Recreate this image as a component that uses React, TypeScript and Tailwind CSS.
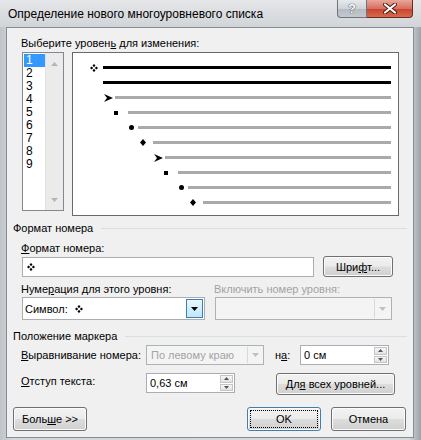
import React from "react";

const rows = [
  { lead: "w-[30px]", pr: "pr-[5px]", sym: "quad", line: "bg-black" },
  { lead: "w-[30px]", pr: "pr-[5px]", sym: "", line: "bg-black" },
  { lead: "w-[42px]", pr: "pr-[2px]", sym: "arrow", line: "bg-[#aaaaaa]" },
  { lead: "w-[55px]", pr: "pr-[10px]", sym: "square", line: "bg-[#aaaaaa]" },
  { lead: "w-[65px]", pr: "pr-[4px]", sym: "circle", line: "bg-[#aaaaaa]" },
  { lead: "w-[80px]", pr: "pr-[7px]", sym: "diamond", line: "bg-[#aaaaaa]" },
  { lead: "w-[92px]", pr: "pr-[2px]", sym: "arrow", line: "bg-[#aaaaaa]" },
  { lead: "w-[105px]", pr: "pr-[10px]", sym: "square", line: "bg-[#aaaaaa]" },
  { lead: "w-[115px]", pr: "pr-[4px]", sym: "circle", line: "bg-[#aaaaaa]" },
  { lead: "w-[130px]", pr: "pr-[7px]", sym: "diamond", line: "bg-[#aaaaaa]" },
];

function Quad() {
  return (
    <svg width="8" height="8" viewBox="0 0 8 8">
      <path d="M4 0 L5.5 1.6 L4 3.2 L2.5 1.6 Z M4 4.8 L5.5 6.4 L4 8 L2.5 6.4 Z M0 4 L1.6 2.5 L3.2 4 L1.6 5.5 Z M4.8 4 L6.4 2.5 L8 4 L6.4 5.5 Z" fill="#000" />
    </svg>
  );
}

function Symbol({ kind }: { kind: string }) {
  if (kind === "quad") return <Quad />;
  if (kind === "arrow")
    return (
      <svg width="9" height="8" viewBox="0 0 9 8">
        <path d="M0 0 L9 4 L0 8 L3 4 Z" fill="#000" />
      </svg>
    );
  if (kind === "square") return <div className="w-[4px] h-[4px] bg-black" />;
  if (kind === "circle") return <div className="w-[5px] h-[5px] rounded-full bg-black" />;
  if (kind === "diamond")
    return (
      <svg width="6" height="7" viewBox="0 0 6 7">
        <path d="M3 0 L6 3.5 L3 7 L0 3.5 Z" fill="#000" />
      </svg>
    );
  return null;
}

function Btn({
  children,
  className = "",
  focused = false,
}: {
  children: React.ReactNode;
  className?: string;
  focused?: boolean;
}) {
  return (
    <div
      className={`flex items-stretch rounded-[3px] border ${
        focused ? "border-[#3c7fb1]" : "border-[#707070]"
      } bg-[linear-gradient(#f2f2f2_0%,#ebebeb_48%,#dddddd_52%,#cfcfcf_100%)] shadow-[inset_0_0_0_1px_#fbfbfb] ${className}`}
    >
      <div
        className={`flex-1 flex items-center justify-center m-[2px] border ${
          focused ? "border-dotted border-black" : "border-transparent"
        }`}
      >
        <span className="whitespace-nowrap">{children}</span>
      </div>
    </div>
  );
}

function Spinner({ value, className = "" }: { value: string; className?: string }) {
  return (
    <div className={`flex items-stretch border border-[#abadb3] bg-white ${className}`}>
      <div className="flex-1 flex items-center pl-[3px]">{value}</div>
      <div className="w-[13px] flex flex-col my-[1px] mr-[1px] gap-[1px]">
        <div className="flex-1 flex items-center justify-center border border-[#c5c5c5] bg-[linear-gradient(#f6f6f6,#e2e2e2)]">
          <svg width="5" height="3" viewBox="0 0 5 3"><path d="M0 3 L2.5 0 L5 3 Z" fill="#555" /></svg>
        </div>
        <div className="flex-1 flex items-center justify-center border border-[#c5c5c5] bg-[linear-gradient(#f6f6f6,#e2e2e2)]">
          <svg width="5" height="3" viewBox="0 0 5 3"><path d="M0 0 L2.5 3 L5 0 Z" fill="#555" /></svg>
        </div>
      </div>
    </div>
  );
}

function DownArrow({ color }: { color: string }) {
  return (
    <svg width="7" height="4" viewBox="0 0 7 4">
      <path d="M0 0 L7 0 L3.5 4 Z" fill={color} />
    </svg>
  );
}

function SectionHead({ title }: { title: string }) {
  return (
    <div className="flex items-center h-[16px] -ml-[9px] mr-[6px]">
      <span className="whitespace-nowrap">{title}</span>
      <div className="flex-1 h-px bg-[#d5dfe5] ml-[8px]" />
    </div>
  );
}

export default function App() {
  return (
    <div className="w-[421px] h-[440px] flex flex-col bg-[linear-gradient(90deg,#bfc4c9_0%,#d3d7db_3%,#d6d9dc_97%,#9da3a9_100%)] font-['Liberation_Sans',Arial,sans-serif] text-[11px] leading-[16px] text-black overflow-hidden">
      {/* Title bar */}
      <div className="h-[27px] flex items-start bg-[linear-gradient(#e4e6e8,#d2d5d8)]">
        <span className="pl-[8px] pt-[6px] text-[12px] leading-[16px] whitespace-nowrap">Определение нового многоуровневого списка</span>
        <div className="ml-auto mr-[8px] flex">
          <div className="w-[30px] h-[18px] flex items-center justify-center border border-[#6d7680] border-t-0 rounded-bl-[4px] bg-[linear-gradient(#e6e9ec_0%,#cfd4d9_50%,#b4bac1_51%,#c4c9ce_100%)]">
            <span className="font-bold text-[13px] leading-[13px] text-white [text-shadow:0_0_1px_#2d3540,0_0_1px_#2d3540]">?</span>
          </div>
          <div className="w-[46px] h-[18px] flex items-center justify-center border border-[#6e2a22] border-t-0 border-l-0 rounded-br-[4px] bg-[linear-gradient(#e8a79b_0%,#d7705f_50%,#c7432c_51%,#d66a4c_100%)]">
            <svg width="14" height="11" viewBox="0 0 14 11">
              <path d="M2 1.5 L12 9.5 M12 1.5 L2 9.5" stroke="#4a1a14" strokeWidth="4" strokeLinecap="round" />
              <path d="M2 1.5 L12 9.5 M12 1.5 L2 9.5" stroke="#ffffff" strokeWidth="2.2" strokeLinecap="round" />
            </svg>
          </div>
        </div>
      </div>

      {/* Dialog body */}
      <div className="ml-[6px] w-[408px] h-[411px] border border-[#858c94] bg-[#f0f0f0] pl-[15px] flex flex-col">
        <div className="mt-[7px] -ml-[1px] h-[16px] whitespace-nowrap">
          Выберите уровен<span className="underline">ь</span> для изменения:
        </div>

        <div className="mt-[1px] flex items-start h-[164px]">
          {/* level list */}
          <div className="w-[42px] h-[159px] border border-[#828790] bg-white flex text-[12px]">
            <div className="w-[22px] pt-px pl-px flex flex-col">
              {["1", "2", "3", "4", "5", "6", "7", "8", "9"].map((n) => (
                <div
                  key={n}
                  className={`h-[13px] leading-[13px] pl-[2px] ${n === "1" ? "bg-[#3399ff] text-white" : ""}`}
                >
                  {n}
                </div>
              ))}
            </div>
            <div className="flex-1 bg-[#ebebeb] border-l border-[#e3e3e3] flex flex-col items-center justify-between pt-[9px] pb-[8px]">
              <svg width="7" height="4" viewBox="0 0 7 4"><path d="M0 4 L3.5 0 L7 4 Z" fill="#b5b5b5" /></svg>
              <DownArrow color="#b5b5b5" />
            </div>
          </div>

          {/* preview */}
          <div className="ml-[8px] w-[327px] h-[164px] border border-[#696969] bg-white pt-[7px] pr-[7px] flex flex-col">
            {rows.map((r, i) => (
              <div key={i} className="flex items-center h-[15px]">
                <div className={`${r.lead} ${r.pr} flex items-center justify-end shrink-0`}>
                  <Symbol kind={r.sym} />
                </div>
                <div className={`flex-1 h-[3px] ${r.line}`} />
              </div>
            ))}
          </div>
        </div>

        {/* Формат номера */}
        <div className="mt-[4px]">
          <SectionHead title="Формат номера" />
        </div>
        <div className="mt-[4px] -ml-[1px] h-[16px] whitespace-nowrap">
          <span className="underline">Ф</span>ормат номера:
        </div>
        <div className="flex items-center h-[21px]">
          <div className="w-[292px] h-[20px] border border-[#abadb3] bg-white flex items-center pl-[4px]">
            <Quad />
          </div>
          <Btn className="ml-[9px] w-[70px] h-[21px]">
            Шри<span className="underline">ф</span>т...
          </Btn>
        </div>

        <div className="mt-[4px] flex h-[16px] whitespace-nowrap">
          <div className="w-[193px] -ml-[1px]">
            Нуме<span className="underline">р</span>ация для этого уровня:
          </div>
          <div className="text-[#a3a3a3]">Включить номер уровня:</div>
        </div>
        <div className="flex h-[23px]">
          <div className="w-[183px] border border-[#abadb3] bg-white flex items-stretch">
            <div className="flex-1 flex items-center pl-[2px]">
              <span className="mr-[7px]">Символ:</span>
              <Quad />
            </div>
            <div className="w-[17px] m-px border border-[#3c7fb1] bg-[linear-gradient(#eaf6fd,#bee6fd)] flex items-center justify-center">
              <DownArrow color="#000" />
            </div>
          </div>
          <div className="ml-[10px] w-[177px] border border-[#adb2b5] bg-[#f4f4f4] flex items-stretch justify-end">
            <div className="w-[16px] my-px mr-px border-l border-[#d9d9d9] flex items-center justify-center">
              <DownArrow color="#c0c0c0" />
            </div>
          </div>
        </div>

        {/* Положение маркера */}
        <div className="mt-[8px]">
          <SectionHead title="Положение маркера" />
        </div>
        <div className="flex items-center h-[22px] whitespace-nowrap">
          <div className="w-[125px] -ml-[1px]">
            <span className="underline">В</span>ыравнивание номера:
          </div>
          <div className="w-[118px] h-[20px] border border-[#adb2b5] bg-[#f4f4f4] flex items-stretch">
            <div className="flex-1 flex items-center pl-[4px] text-[#a3a3a3]">По левому краю</div>
            <div className="w-[15px] my-px mr-px border-l border-[#d9d9d9] flex items-center justify-center">
              <DownArrow color="#c0c0c0" />
            </div>
          </div>
          <div className="ml-[11px] w-[25px]">
            н<span className="underline">а</span>:
          </div>
          <Spinner value="0 см" className="w-[89px] h-[20px]" />
        </div>

        <div className="mt-[6px] flex items-start h-[24px] whitespace-nowrap">
          <div className="w-[125px] -ml-[1px] mt-[1px]">
            <span className="underline">О</span>тступ текста:
          </div>
          <Spinner value="0,63 см" className="w-[89px] h-[20px] mt-[1px]" />
          <Btn className="ml-[41px] w-[119px] h-[22px] mt-[1px]">
            Дл<span className="underline">я</span> всех уровней...
          </Btn>
        </div>

        <div className="mt-[11px] -ml-[9px] mr-[7px] flex h-[24px]">
          <Btn className="w-[74px]">
            Боль<span className="underline">ш</span>е &gt;&gt;
          </Btn>
          <Btn className="ml-auto w-[74px]" focused>
            OK
          </Btn>
          <Btn className="ml-[10px] w-[75px]">Отмена</Btn>
        </div>
      </div>
    </div>
  );
}
